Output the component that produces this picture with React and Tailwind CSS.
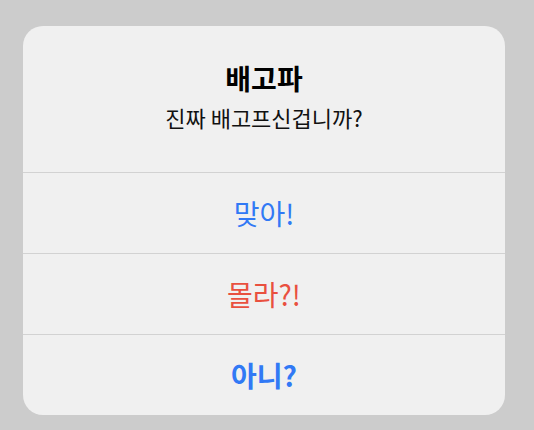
const actions = [
    { label: '맞아!', className: 'text-[#3179f5] font-normal' },
    { label: '몰라?!', className: 'text-[#e9503f] font-normal' },
    { label: '아니?', className: 'text-[#3179f5] font-bold' },
]

export default function App() {
    return (
        <div className="w-[534px] h-[430px] bg-[#cccccc] pt-[26px] pl-[23px] font-['Noto_Sans_CJK_KR',sans-serif]">
            <div className="w-[482px] bg-[#f0f0f0] rounded-[20px] overflow-hidden">
                {/* header */}
                <div className="h-[146px] flex flex-col items-center pt-[35px]">
                    <h1 className="text-[28px] leading-[34px] font-bold text-black">배고파</h1>
                    <p className="mt-[8px] text-[22px] leading-[28px] text-[#111]">진짜 배고프신겁니까?</p>
                </div>
                {actions.map((a) => (
                    <button
                        key={a.label}
                        className={`w-full h-[81px] border-t border-[#d2d2d2] flex items-center justify-center text-[28px] ${a.className}`}
                    >
                        {a.label}
                    </button>
                ))}
            </div>
        </div>
    )
}
